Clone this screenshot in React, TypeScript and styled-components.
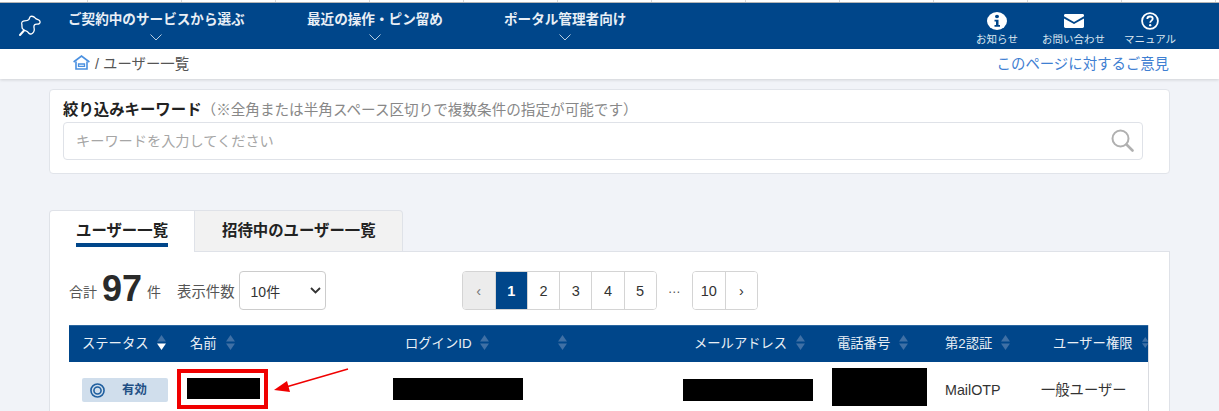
import React from "react";
import styled, { createGlobalStyle } from "styled-components";

const NAVY = "#00468a";

const Global = createGlobalStyle`
  html, body { margin: 0; padding: 0; height: 411px; overflow: hidden; background: #f1f3f8; }
  body { font-family: "Liberation Sans", "Noto Sans CJK JP", sans-serif; color: #333; }
  * { box-sizing: border-box; }
`;

const Page = styled.div`
  position: relative;
  width: 1219px;
  height: 411px;
  overflow: hidden;
`;

const TopStrip = styled.div`
  height: 3px;
  background: repeating-linear-gradient(to right, #fff 0 87px, #d8d8d8 87px 88px, #fff 88px 94px);
  border-bottom: 1px solid #b5b5b5;
`;

const NavBar = styled.nav`
  height: 46px;
  background: ${NAVY};
  display: flex;
  color: #fff;
`;

const Logo = styled.div`
  width: 68px;
  display: flex;
  align-items: center;
  padding-left: 19px;
`;

const NavMenus = styled.div`
  display: flex;
  flex: 1;
`;

const NavMenu = styled.div<{ $width: number }>`
  width: ${(p) => p.$width}px;
  display: flex;
  flex-direction: column;
  align-items: flex-start;
  padding-top: 8px;
`;

const NavLabel = styled.span`
  font-size: 13.6px;
  line-height: 17px;
  font-weight: 700;
  color: #e9eff6;
  display: flex;
  flex-direction: column;
  align-items: center;
  gap: 6px;
`;

const NavActions = styled.div`
  display: flex;
  padding-right: 31px;
`;

const NavAction = styled.div<{ $width: number }>`
  width: ${(p) => p.$width}px;
  display: flex;
  flex-direction: column;
  align-items: center;
  padding-top: 7px;
  gap: 2px;
  font-size: 10.5px;
  line-height: 13px;
  color: #dce6f0;
`;

const IconBox = styled.div`
  height: 21px;
  display: flex;
  align-items: center;
`;

const Crumbs = styled.div`
  height: 30px;
  background: #fff;
  box-shadow: 0 1px 3px rgba(0, 0, 0, 0.14);
  display: flex;
  align-items: center;
  justify-content: space-between;
  padding: 0 50px 4px 73px;
  font-size: 14.4px;
`;

const CrumbTrail = styled.div`
  display: flex;
  align-items: center;
  gap: 5px;
  color: #555;
`;

const Feedback = styled.a`
  color: #3f80d2;
`;

const Main = styled.main`
  margin: 10px 0 0 49px;
  width: 1121px;
`;

const SearchCard = styled.section`
  height: 85px;
  background: #fff;
  border: 1px solid #e1e4ea;
  border-radius: 4px;
  padding: 10px 26px 0 13px;
`;

const SearchTitle = styled.div`
  font-size: 15.4px;
  line-height: 20px;
  font-weight: 700;
  color: #222;
  display: flex;
  align-items: baseline;
  height: 22px;
`;

const SearchNote = styled.span`
  font-size: 14.6px;
  font-weight: 400;
  color: #888;
`;

const SearchField = styled.div`
  height: 38px;
  border: 1px solid #dfe2e8;
  border-radius: 4px;
  display: flex;
  align-items: center;
  justify-content: space-between;
  padding: 0 8px 3px 12px;
  font-size: 14.2px;
  color: #a6a6a6;
`;

const Tabs = styled.div`
  display: flex;
  margin-top: 36px;
  height: 42px;
  position: relative;
  z-index: 1;
`;

const Tab = styled.div<{ $active?: boolean; $width: number }>`
  width: ${(p) => p.$width}px;
  background: ${(p) => (p.$active ? "#fff" : "#f2f2f2")};
  border: 1px solid #dfe2e8;
  border-left-width: ${(p) => (p.$active ? "1px" : "0")};
  border-bottom: ${(p) => (p.$active ? "none" : "1px solid #dfe2e8")};
  border-radius: ${(p) => (p.$active ? "4px 0 0 0" : "0 4px 0 0")};
  padding-left: ${(p) => (p.$active ? "26px" : "27px")};
  padding-top: 10px;
  font-size: 15.4px;
  line-height: 20px;
  font-weight: 700;
  color: #222;
`;

const TabText = styled.span<{ $active?: boolean }>`
  display: inline-block;
  height: 26px;
  border-bottom: ${(p) => (p.$active ? `4px solid ${NAVY}` : "none")};
`;

const ListCard = styled.section`
  height: 170px;
  margin-top: -1px;
  background: #fff;
  border: 1px solid #dfe2e8;
  padding: 19px 20px 0 19px;
`;

const Controls = styled.div`
  height: 39px;
  display: flex;
  align-items: center;
  position: relative;
`;

const Total = styled.div`
  display: flex;
  align-items: center;
  font-size: 14px;
  color: #555;
  width: 108px;
`;

const TotalNumber = styled.strong`
  font-size: 36px;
  line-height: 35px;
  color: #2a2a2a;
  margin: 0 5px 4px 5px;
`;

const CountLabel = styled.span`
  font-size: 14.4px;
  color: #555;
  margin-right: 4px;
`;

const CountSelect = styled.div`
  width: 87px;
  height: 39px;
  border: 1px solid #ccc;
  border-radius: 4px;
  display: flex;
  align-items: center;
  justify-content: space-between;
  padding: 0 4px 0 11px;
  font-size: 14px;
  color: #333;
`;

const Pager = styled.div`
  display: flex;
  margin-left: 136px;
  height: 39px;
`;

const PageGroup = styled.div`
  display: flex;
  border: 1px solid #d4d4d4;
  border-radius: 4px;
  overflow: hidden;
`;

const PageCell = styled.div<{ $state?: "current" | "off" }>`
  width: 32.2px;
  display: flex;
  align-items: center;
  justify-content: center;
  font-size: 14.5px;
  font-weight: ${(p) => (p.$state === "current" ? 700 : 400)};
  color: ${(p) => (p.$state === "current" ? "#fff" : p.$state === "off" ? "#777" : "#333")};
  background: ${(p) => (p.$state === "current" ? NAVY : p.$state === "off" ? "#ececec" : "#fff")};
  & + & {
    border-left: 1px solid #d4d4d4;
  }
`;

const PageGap = styled.div`
  width: 35px;
  display: flex;
  align-items: center;
  justify-content: center;
  font-size: 13px;
  color: #555;
  padding-bottom: 4px;
`;

const Table = styled.div`
  margin-top: 15px;
  width: 1080px;
  overflow: hidden;
  border-right: 1px solid #d9dbe0;
`;

const columns = "108px 215px 158px 131px 143px 108px 108px 108px";

const HeadRow = styled.div`
  display: grid;
  grid-template-columns: ${columns};
  height: 37px;
  background: ${NAVY};
  border-top: 1px solid #2a669f;
`;

const HeadCell = styled.div<{ $pad?: number }>`
  display: flex;
  align-items: center;
  gap: 9px;
  padding-left: ${(p) => p.$pad ?? 13}px;
  padding-bottom: 3px;
  font-size: 13.3px;
  color: #eaf0f6;
  white-space: nowrap;
`;

const BodyRow = styled.div`
  display: grid;
  grid-template-columns: ${columns};
  height: 60px;
`;

const BodyCell = styled.div<{ $pad?: number }>`
  padding-left: ${(p) => p.$pad ?? 13}px;
  padding-top: 14px;
  font-size: 14.3px;
  color: #333;
  line-height: 28px;
  white-space: nowrap;
`;

const Badge = styled.div`
  width: 86px;
  height: 24px;
  margin-top: 2px;
  border-radius: 2px;
  background: #d0deec;
  display: flex;
  align-items: center;
  padding-left: 8px;
  gap: 17px;
  font-size: 12.4px;
  font-weight: 700;
  color: #1f4f84;
`;

const Redaction = styled.div<{ $w: number; $h: number; $x?: number; $y?: number }>`
  width: ${(p) => p.$w}px;
  height: ${(p) => p.$h}px;
  margin-left: ${(p) => p.$x ?? 0}px;
  margin-top: ${(p) => p.$y ?? 0}px;
  background: #000;
`;

const RedBox = styled.div`
  position: absolute;
  left: 177px;
  top: 369px;
  width: 91px;
  height: 40px;
  border: 4px solid #f00000;
`;

const Arrow = styled.svg`
  position: absolute;
  left: 272px;
  top: 366px;
`;

const Chevron = () => (
  <svg width="12" height="7" viewBox="0 0 12 7" fill="none" stroke="#b9cde0" strokeWidth="1">
    <path d="M0.5 0.5 L6 6 L11.5 0.5" />
  </svg>
);

const Sort = ({ active }: { active?: boolean }) => (
  <svg width="9" height="15" viewBox="0 0 9 15">
    <path d="M4.5 0 L9 6.5 H0 Z" fill="#3f70a5" />
    <path d="M4.5 15 L9 8.5 H0 Z" fill={active ? "#fff" : "#3f70a5"} />
  </svg>
);

const heads: { label: string; pad?: number; active?: boolean }[] = [
  { label: "ステータス", active: true },
  { label: "名前" },
  { label: "ログインID" },
  { label: "", pad: 8 },
  { label: "メールアドレス" },
  { label: "電話番号" },
  { label: "第2認証" },
  { label: "ユーザー権限" },
];

export default function App() {
  return (
    <Page>
      <Global />
      <TopStrip />
      <NavBar>
        <Logo>
          <svg width="22" height="22" viewBox="0 0 22 22" fill="none" stroke="#fff" strokeWidth="1.3" strokeLinejoin="round" strokeLinecap="round">
            <path d="M11.7 1.4 C13.8 .8 15.2 1.8 16.4 3.2 C17.6 4.4 19.6 4.2 20.6 5.6 C21.4 6.8 21.2 8.6 19.6 9 C18 9.4 16.4 8.6 15.4 10 C14.2 11.6 15.6 13.4 15.2 15.4 C14.8 17.8 12.6 19.6 10.8 18.8 C9.2 18 9 16.6 7.4 16.2 C5.8 15.8 4.2 15.4 3.4 13.6 C2.6 12 3.2 10.6 2.8 9 C2.4 7 3.8 5.8 5.6 5.8 C7.4 5.8 8.8 5.8 9.8 4.6 C10.6 3.6 10.4 1.8 11.7 1.4 Z" />
            <path d="M5 15.5 L1 20" strokeWidth="2" />
          </svg>
        </Logo>
        <NavMenus>
          <NavMenu $width={239}>
            <NavLabel>
              ご契約中のサービスから選ぶ
              <Chevron />
            </NavLabel>
          </NavMenu>
          <NavMenu $width={197}>
            <NavLabel>
              最近の操作・ピン留め
              <Chevron />
            </NavLabel>
          </NavMenu>
          <NavMenu $width={200}>
            <NavLabel>
              ポータル管理者向け
              <Chevron />
            </NavLabel>
          </NavMenu>
        </NavMenus>
        <NavActions>
          <NavAction $width={76}>
            <IconBox>
              <svg width="20" height="18" viewBox="0 0 20 20" preserveAspectRatio="none">
                <circle cx="10" cy="10" r="10" fill="#fff" />
                <circle cx="10" cy="5" r="2" fill={NAVY} />
                <path d="M7.5 8.5 H11.5 V14.5 H13 V16.5 H7.5 V14.5 H9 V10.5 H7.5 Z" fill={NAVY} />
              </svg>
            </IconBox>
            お知らせ
          </NavAction>
          <NavAction $width={77}>
            <IconBox>
              <svg width="20" height="14" viewBox="0 0 20 15" preserveAspectRatio="none">
                <path d="M1.5 0 H18.5 C19.4 0 20 .6 20 1.5 V2.5 L10 8.5 L0 2.5 V1.5 C0 .6 .6 0 1.5 0 Z" fill="#fff" />
                <path d="M0 4.8 L10 10.8 L20 4.8 V13.5 C20 14.4 19.4 15 18.5 15 H1.5 C.6 15 0 14.4 0 13.5 Z" fill="#fff" />
              </svg>
            </IconBox>
            お問い合わせ
          </NavAction>
          <NavAction $width={76}>
            <IconBox>
              <svg width="18" height="18" viewBox="0 0 20 20" fill="none">
                <circle cx="10" cy="10" r="8.8" stroke="#fff" strokeWidth="2" />
                <path d="M7 7.8 C7 5.8 8.4 5 10 5 C11.8 5 13 6 13 7.5 C13 9.6 10.2 9.6 10.2 12" stroke="#fff" strokeWidth="2" />
                <circle cx="10.2" cy="14.6" r="1.3" fill="#fff" />
              </svg>
            </IconBox>
            マニュアル
          </NavAction>
        </NavActions>
      </NavBar>
      <Crumbs>
        <CrumbTrail>
          <svg width="17" height="15" viewBox="0 0 17 15" fill="none" stroke="#4a90e0" strokeWidth="1.6">
            <path d="M0.6 7 L8.5 1 L16.4 7" />
            <path d="M3 6.4 V14 H14 V6.4" />
            <path d="M5.5 9 H11.5 V11.4 H5.5 Z" strokeWidth="1.3" />
          </svg>
          <span>/ ユーザー一覧</span>
        </CrumbTrail>
        <Feedback>このページに対するご意見</Feedback>
      </Crumbs>
      <Main>
        <SearchCard>
          <SearchTitle>
            絞り込みキーワード
            <SearchNote>（※全角または半角スペース区切りで複数条件の指定が可能です）</SearchNote>
          </SearchTitle>
          <SearchField>
            キーワードを入力してください
            <svg width="24" height="24" viewBox="0 0 24 24" fill="none" stroke="#b0b0b0" strokeLinecap="round">
              <circle cx="10.5" cy="10.5" r="8" strokeWidth="2" />
              <path d="M16.5 16.5 L22.5 22.5" strokeWidth="2.6" />
            </svg>
          </SearchField>
        </SearchCard>
        <Tabs>
          <Tab $active $width={146}>
            <TabText $active>ユーザー一覧</TabText>
          </Tab>
          <Tab $width={208}>
            <TabText>招待中のユーザー一覧</TabText>
          </Tab>
        </Tabs>
        <ListCard>
          <Controls>
            <Total>
              合計<TotalNumber>97</TotalNumber>件
            </Total>
            <CountLabel>表示件数</CountLabel>
            <CountSelect>
              10件
              <svg width="11" height="7" viewBox="0 0 11 7" fill="none" stroke="#333" strokeWidth="1.8">
                <path d="M1 1 L5.5 5.5 L10 1" />
              </svg>
            </CountSelect>
            <Pager>
              <PageGroup>
                <PageCell $state="off">‹</PageCell>
                <PageCell $state="current">1</PageCell>
                <PageCell>2</PageCell>
                <PageCell>3</PageCell>
                <PageCell>4</PageCell>
                <PageCell>5</PageCell>
              </PageGroup>
              <PageGap>…</PageGap>
              <PageGroup>
                <PageCell>10</PageCell>
                <PageCell>›</PageCell>
              </PageGroup>
            </Pager>
          </Controls>
          <Table>
            <HeadRow>
              {heads.map((h, i) => (
                <HeadCell key={i} $pad={h.pad}>
                  {h.label && <span>{h.label}</span>}
                  <Sort active={h.active} />
                </HeadCell>
              ))}
            </HeadRow>
            <BodyRow>
              <BodyCell>
                <Badge>
                  <svg width="15" height="15" viewBox="0 0 16 16" fill="none" stroke="#1f5f9f">
                    <circle cx="8" cy="8" r="7" strokeWidth="1.7" />
                    <circle cx="8" cy="8" r="3.8" strokeWidth="1.7" />
                  </svg>
                  有効
                </Badge>
              </BodyCell>
              <BodyCell>
                <Redaction $w={73} $h={21} $x={-3} $y={2} />
              </BodyCell>
              <BodyCell>
                <Redaction $w={130} $h={22} $x={-12} $y={2} />
              </BodyCell>
              <BodyCell />
              <BodyCell>
                <Redaction $w={130} $h={22} $x={-11} $y={3} />
              </BodyCell>
              <BodyCell>
                <Redaction $w={95} $h={38} $x={-5} $y={-8} />
              </BodyCell>
              <BodyCell>MailOTP</BodyCell>
              <BodyCell $pad={1}>一般ユーザー</BodyCell>
            </BodyRow>
          </Table>
        </ListCard>
      </Main>
      <RedBox />
      <Arrow width="78" height="32" viewBox="0 0 78 32" fill="none">
        <path d="M76 3 L14 21" stroke="#f00000" strokeWidth="1.5" />
        <path d="M2 24 L15 15 L18 26 Z" fill="#f00000" />
      </Arrow>
    </Page>
  );
}
